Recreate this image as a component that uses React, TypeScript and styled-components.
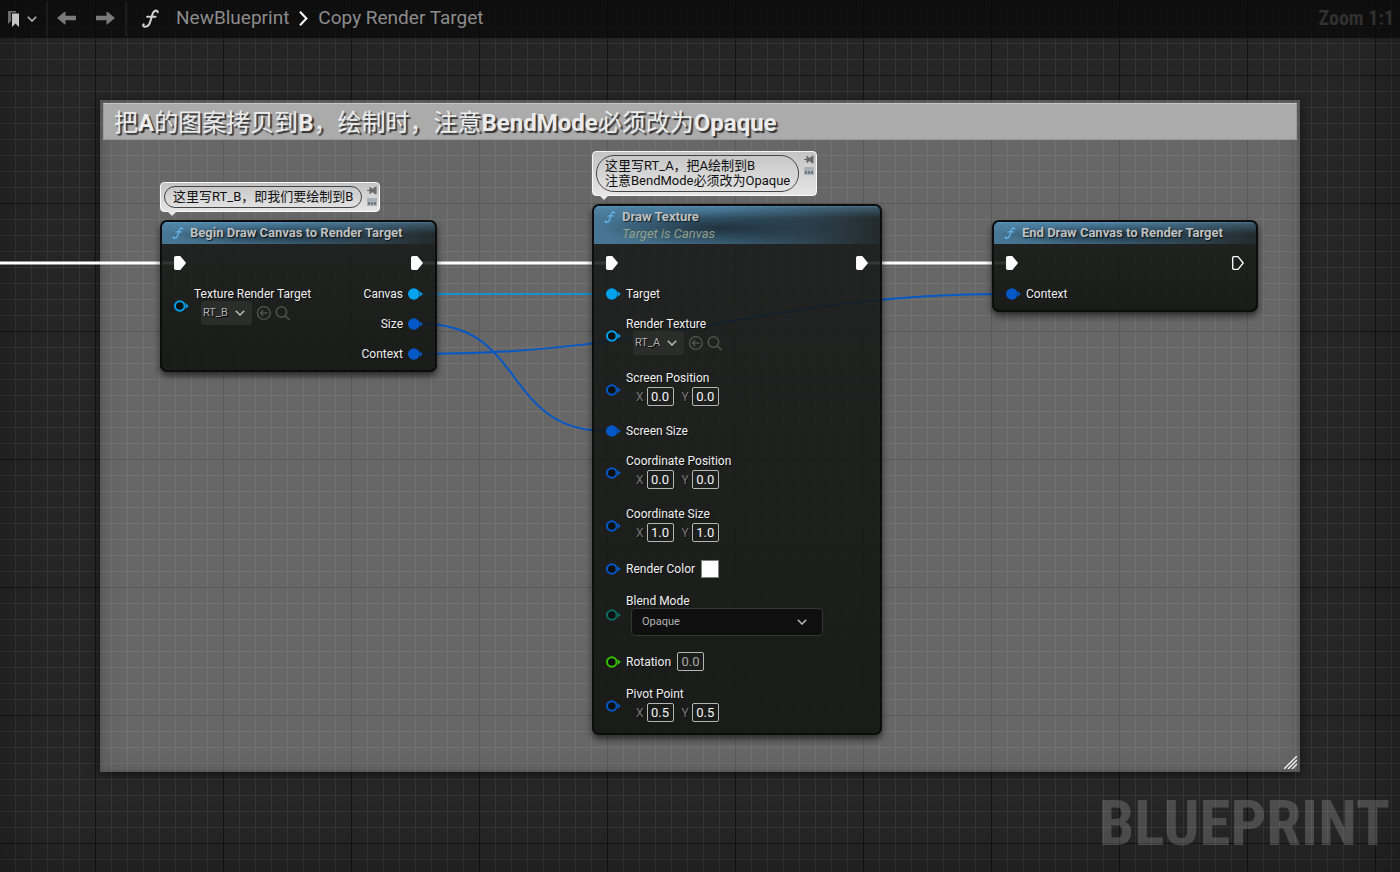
import React from "react";
import styled, { createGlobalStyle, css } from "styled-components";

const GlobalStyle = createGlobalStyle`
  * { box-sizing: border-box; }
  body {
    margin: 0;
    background: #262626;
    font-family: Roboto, "Noto Sans CJK SC", sans-serif;
    font-size: 12px;
    color: #f0f0f0;
  }
  button, input, select { font: inherit; color: inherit; margin: 0; }
`;

const blue = "#0558c8";
const sky = "#00a2ee";
const teal = "#0b6a62";
const green = "#36c400";

/* ---------- Graph surface ---------- */

const Graph = styled.main`
  position: relative;
  min-height: 100vh;
  overflow: hidden;
  background-color: #262626;
  background-image:
    linear-gradient(to right, #141414 1px, transparent 1px),
    linear-gradient(to bottom, #141414 1px, transparent 1px),
    linear-gradient(to right, #353535 1px, transparent 1px),
    linear-gradient(to bottom, #353535 1px, transparent 1px);
  background-size: 128px 128px, 128px 128px, 16px 16px, 16px 16px;
  background-position: 95px 0, 0 75px, 15px 0, 0 11px;
`;

const Vignette = styled.div`
  position: absolute;
  inset: 0;
  box-shadow: inset 0 0 60px rgba(0, 0, 0, 0.35);
  pointer-events: none;
`;

const TopBar = styled.header`
  position: absolute;
  inset: 0 0 auto 0;
  height: 38px;
  display: flex;
  align-items: center;
  background: rgba(8, 8, 8, 0.74);
`;

const BarGroup = styled.div<{ $gap: number; $pad: string }>`
  display: flex;
  align-items: center;
  height: 34px;
  gap: ${(p) => p.$gap}px;
  padding: ${(p) => p.$pad};
  border-right: 2px solid #1c1c1c;
`;

const IconButton = styled.button`
  display: flex;
  align-items: center;
  justify-content: center;
  padding: 0;
  border: 0;
  background: none;
`;

const Crumbs = styled.nav`
  flex: 1;
  display: flex;
  align-items: center;
  gap: 10px;
  padding: 0 0 2px 14px;
  font-size: 19px;
  line-height: 22px;
`;

const Crumb = styled.a`
  color: #8c8c8c;
  text-decoration: none;
`;

const FunctionMark = styled.span`
  display: flex;
  margin-right: 6px;
`;

const ZoomText = styled.span`
  padding: 0 6px 2px 0;
  color: #303030;
  font: bold 20px/24px "Roboto Condensed", "Liberation Sans Narrow", Roboto, sans-serif;
`;

const Watermark = styled.div`
  position: absolute;
  right: 10px;
  bottom: 12px;
  color: rgba(255, 255, 255, 0.18);
  font: bold 63px/72px "Roboto Condensed", "Liberation Sans Narrow", Roboto, sans-serif;
`;

/* ---------- Comment region ---------- */

const Region = styled.section`
  position: absolute;
  left: 100px;
  top: 100px;
  width: 1200px;
  height: 672px;
  padding: 3px;
  background: rgba(255, 255, 255, 0.3);
  box-shadow: 0 2px 10px rgba(0, 0, 0, 0.6), inset 0 0 0 2px rgba(80, 80, 80, 0.3),
    inset 0 0 20px rgba(40, 40, 40, 0.3);
`;

const RegionTitle = styled.h1`
  margin: 0;
  padding: 3px 10px 0;
  height: 37px;
  background: #ababab;
  border: 1px solid #999;
  border-top-color: #c4c4c4;
  font-size: 24px;
  line-height: 32px;
  font-weight: 400;
  color: #ececec;
  text-shadow: 2px 2px 1px #333;
  white-space: nowrap;
  b { font-weight: 700; }
`;

const ResizeGrip = styled.svg`
  position: absolute;
  right: 3px;
  bottom: 3px;
`;

const Wires = styled.svg`
  position: absolute;
  inset: 0;
  width: 100%;
  height: 100%;
`;

/* ---------- Nodes ---------- */

const NodeBox = styled.article<{ $x: number; $y: number; $w: number }>`
  position: absolute;
  left: ${(p) => p.$x}px;
  top: ${(p) => p.$y}px;
  width: ${(p) => p.$w}px;
  border-radius: 7px;
  background: linear-gradient(rgba(22, 25, 23, 0.86), rgba(16, 18, 16, 0.89));
  box-shadow: 0 4px 7px rgba(0, 0, 0, 0.6);
  &::after {
    content: "";
    position: absolute;
    inset: 0;
    border: 2px solid #0c0d0c;
    border-radius: 7px;
    pointer-events: none;
  }
`;

const NodeHeader = styled.header`
  display: flex;
  gap: 6px;
  padding: 4px 12px;
  border-radius: 7px 7px 0 0;
  background:
    linear-gradient(rgba(110, 180, 225, 0.5) 2px, rgba(90, 150, 190, 0.4) 4px, transparent 14px),
    radial-gradient(ellipse 42% 45% at 45% 60%, rgba(24, 38, 48, 0.8), transparent),
    linear-gradient(to right, #487795, #3c647d 45%, #2a3840 85%, #222a2c);
  svg { flex: none; margin-top: 3px; }
`;

const NodeTitle = styled.h2`
  margin: 0;
  font-size: 13px;
  line-height: 17px;
  height: 16px;
  font-weight: 700;
  color: #bfc1c2;
  text-shadow: 1px 1px 1px rgba(0, 0, 0, 0.7);
  white-space: nowrap;
`;

const NodeSubtitle = styled.p`
  margin: 0;
  font-size: 13px;
  line-height: 19px;
  height: 16px;
  font-style: italic;
  color: #929f8a;
`;

const NodeBody = styled.div`
  display: flex;
  justify-content: space-between;
  padding: 4px 14px 3px;
`;

const PinColumn = styled.div<{ $end?: boolean }>`
  display: flex;
  flex-direction: column;
  align-items: ${(p) => (p.$end ? "flex-end" : "flex-start")};
`;

const PinRow = styled.div`
  display: flex;
  align-items: center;
  gap: 5px;
  padding: 8px 0;
  line-height: 14px;
  white-space: nowrap;
  text-shadow: 1px 1px 0 rgba(0, 0, 0, 0.7);
  > svg { flex: none; }
`;

const Stack = styled.div`
  display: flex;
  flex-direction: column;
`;

const Inline = styled.div`
  display: flex;
  align-items: center;
  gap: 6px;
`;

const VectorFields = styled.div`
  display: flex;
  align-items: center;
  padding: 2px 0 2px 10px;
  gap: 8px;
`;

const Axis = styled.label`
  display: flex;
  align-items: center;
  gap: 3px;
  color: #777;
`;

const NumberBox = styled.input<{ $dim?: boolean }>`
  width: 27px;
  height: 19px;
  padding: 0;
  border: 1px solid #b4b6b4;
  border-radius: 2px;
  background: transparent;
  text-align: center;
  font-size: 13px;
  line-height: 17px;
  color: ${(p) => (p.$dim ? "#a8a8a8" : "#f4f4f4")};
`;

const Swatch = styled.button`
  width: 18px;
  height: 18px;
  padding: 0;
  border: 1px solid #808080;
  background: #fff;
`;

const AssetRow = styled.div`
  display: flex;
  align-items: center;
  gap: 4px;
  padding-left: 7px;
`;

const Picker = styled.span<{ $wide?: boolean }>`
  display: grid;
  align-items: center;
  ${(p) =>
    p.$wide
      ? css`width: 192px; margin-left: 5px;`
      : css`width: 51px;`}
  > * { grid-area: 1 / 1; }
  > svg {
    justify-self: end;
    margin-right: ${(p) => (p.$wide ? 16 : 7)}px;
    pointer-events: none;
  }
`;

const PickerSelect = styled.select<{ $wide?: boolean }>`
  appearance: none;
  width: 100%;
  font-size: 11px;
  ${(p) =>
    p.$wide
      ? css`
          height: 28px;
          padding: 0 10px;
          border: 1px solid #343634;
          border-radius: 4px;
          background: #0f0f0f;
          color: #b4b4b4;
        `
      : css`
          height: 24px;
          padding: 0 2px;
          border: 0;
          border-radius: 3px;
          background: #2b2d2b;
          color: #b0b0b0;
          text-shadow: 1px 1px 0 #000;
        `}
`;

/* ---------- Note bubbles ---------- */

const Bubble = styled.aside`
  position: absolute;
  left: 0;
  bottom: calc(100% + 8px);
  display: flex;
  gap: 5px;
  padding: 3px 2px 3px 3px;
  border: 1px solid #f8f8f8;
  border-radius: 4px;
  background: linear-gradient(#c4c4c4, #e6e6e6);
  &::after {
    content: "";
    position: absolute;
    left: 6px;
    top: 100%;
    border: 5px solid transparent;
    border-top-color: #e8e8e8;
    border-bottom-width: 0;
  }
`;

const BubbleText = styled.p`
  margin: 0;
  padding: 2px 8px 3px;
  border: 1px solid #444;
  border-radius: 18px;
  font-size: 13px;
  line-height: 15px;
  color: #111;
  white-space: nowrap;
`;

const BubbleTools = styled.div`
  display: flex;
  flex-direction: column;
  gap: 3px;
`;

/* ---------- Icons ---------- */

const FIcon = ({ size, color }: { size: number; color: string }) => (
  <svg width={size} height={size} viewBox="0 0 20 20" fill="none" stroke={color} strokeLinecap="round">
    <path d="M17.6 3.3C17.4 1.4 14.8 1 13.2 3.2C11.6 5.6 10.6 11.5 9.2 14.8C8 17.8 5.4 19.4 3.2 18.4C2 17.8 2 16.6 2.8 16.2" strokeWidth="2.2" />
    <path d="M6.4 8.2H15.4" strokeWidth="2" />
  </svg>
);

const Chevron = () => (
  <svg width="10" height="6" viewBox="0 0 10 6" fill="none" stroke="#b4b4b4" strokeWidth="1.6">
    <path d="M0.8 0.8L5 5L9.2 0.8" />
  </svg>
);

const ExecPin = ({ open }: { open?: boolean }) => (
  <svg width="12" height="15" viewBox="0 0 12 15" fill={open ? "none" : "#fff"} stroke="#fff" strokeWidth="1.3" strokeLinejoin="round">
    <path d="M0.7 1.8Q0.7 0.7 1.8 0.7H6L11.2 7L6 13.3H1.8Q0.7 13.3 0.7 12.2Z" />
  </svg>
);

const DataPin = ({ color, linked }: { color: string; linked?: boolean }) => (
  <svg width="15" height="12" viewBox="0 0 15 12">
    <circle cx="5.8" cy="6" r="4.8" fill={linked ? color : "#0e1010"} stroke={color} strokeWidth="2" />
    <path d="M11.4 3L14.8 6L11.4 9Q12.6 6 11.4 3Z" fill={color} />
  </svg>
);

const UseIcon = () => (
  <svg width="15" height="15" viewBox="0 0 15 15" fill="none" stroke="#505250" strokeWidth="1.4">
    <circle cx="7.8" cy="7" r="6.4" />
    <path d="M11.5 7H4.5M7.3 4.1L4.4 7L7.3 9.9" />
  </svg>
);

const BrowseIcon = () => (
  <svg width="15" height="15" viewBox="0 0 15 15" fill="none" stroke="#505250" strokeWidth="1.5">
    <circle cx="6.4" cy="6" r="5.2" />
    <path d="M10.2 9.8L14.6 14.2" />
  </svg>
);

const BarArrow = ({ flip }: { flip?: boolean }) => (
  <svg width="19" height="14" viewBox="0 0 19 14" fill="#7a7a7a">
    <path d={flip ? "M19 6L10.5 -1V3.8H0V8.2H10.5V13Z" : "M0 6L8.5 -1V3.8H19V8.2H8.5V13Z"} />
  </svg>
);

/* ---------- Composite parts ---------- */

const AssetPicker = ({ id, value }: { id: string; value: string }) => (
  <AssetRow>
    <Picker>
      <PickerSelect id={id} defaultValue={value}>
        <option>{value}</option>
      </PickerSelect>
      <Chevron />
    </Picker>
    <IconButton aria-label="Use selected asset"><UseIcon /></IconButton>
    <IconButton aria-label="Browse to asset"><BrowseIcon /></IconButton>
  </AssetRow>
);

const AssetPin = ({ id, name, value }: { id: string; name: string; value: string }) => (
  <PinRow>
    <DataPin color={sky} />
    <Stack>
      <label htmlFor={id}>{name}</label>
      <AssetPicker id={id} value={value} />
    </Stack>
  </PinRow>
);

const VectorPin = ({ name, value }: { name: string; value: string }) => (
  <PinRow>
    <DataPin color={blue} />
    <Stack role="group" aria-label={name}>
      <span>{name}</span>
      <VectorFields>
        <Axis>X<NumberBox defaultValue={value} /></Axis>
        <Axis>Y<NumberBox defaultValue={value} /></Axis>
      </VectorFields>
    </Stack>
  </PinRow>
);

const InputPin = ({ name, color }: { name: string; color: string }) => (
  <PinRow><DataPin color={color} linked />{name}</PinRow>
);

const OutputPin = ({ name, color }: { name: string; color: string }) => (
  <PinRow>{name}<DataPin color={color} linked /></PinRow>
);

const Note = ({ lines }: { lines: string[] }) => (
  <Bubble>
    <BubbleText>
      {lines.map((line) => (
        <React.Fragment key={line}>{line}<br /></React.Fragment>
      ))}
    </BubbleText>
    <BubbleTools>
      <IconButton aria-label="Pin comment">
        <svg width="10" height="9" viewBox="0 0 10 9" fill="#6a6a6a">
          <path d="M0 4H2.4V1.2H3.8L4.6 2.6H6.4L7.8 0.8H9.6V8.2H7.8L6.4 6.4H4.6L3.8 7.8H2.4V5H0Z" />
        </svg>
      </IconButton>
      <IconButton aria-label="Toggle bubble">
        <svg width="10" height="8" viewBox="0 0 10 8">
          <rect width="10" height="8" fill="#a9b1b8" />
          <path d="M1 5.6H3M4 5.6H6M7 5.6H9" stroke="#59636c" strokeWidth="2" />
        </svg>
      </IconButton>
    </BubbleTools>
  </Bubble>
);

interface NodeProps {
  x: number;
  y: number;
  width: number;
  title: string;
  subtitle?: string;
  note?: string[];
  inputs: React.ReactNode;
  outputs: React.ReactNode;
}

const GraphNode = ({ x, y, width, title, subtitle, note, inputs, outputs }: NodeProps) => (
  <NodeBox $x={x} $y={y} $w={width}>
    {note && <Note lines={note} />}
    <NodeHeader>
      <FIcon size={12} color="#62b4ea" />
      <div>
        <NodeTitle>{title}</NodeTitle>
        {subtitle && <NodeSubtitle>{subtitle}</NodeSubtitle>}
      </div>
    </NodeHeader>
    <NodeBody>
      <PinColumn>{inputs}</PinColumn>
      <PinColumn $end>{outputs}</PinColumn>
    </NodeBody>
  </NodeBox>
);

export default function App() {
  return (
    <>
      <GlobalStyle />
      <Graph>
        <Vignette />
        <Region>
          <RegionTitle>
            把<b>A</b>的图案拷贝到<b>B</b>，绘制时，注意<b>BendMode</b>必须改为<b>Opaque</b>
          </RegionTitle>
          <ResizeGrip width="13" height="13" viewBox="0 0 13 13" stroke="#f4f4f4" strokeWidth="1.4">
            <path d="M0 13L13 0M4 13L13 4M8 13L13 8" />
          </ResizeGrip>
        </Region>
        <Watermark>BLUEPRINT</Watermark>
        <Wires fill="none">
          <path d="M0 263H174M423 263H606M868 263H1006" stroke="#fff" strokeWidth="3" />
          <path d="M423 294H606" stroke="#1691cf" strokeWidth="2" />
          <path d="M423 324C526 324 503 431 606 431" stroke={blue} strokeWidth="2" />
          <path d="M423 354C667 354 762 294 1006 294" stroke={blue} strokeWidth="2" />
        </Wires>
        <GraphNode
          x={160}
          y={220}
          width={277}
          title="Begin Draw Canvas to Render Target"
          note={["这里写RT_B，即我们要绘制到B"]}
          inputs={
            <>
              <PinRow><ExecPin /></PinRow>
              <AssetPin id="target-asset" name="Texture Render Target" value="RT_B" />
            </>
          }
          outputs={
            <>
              <PinRow><ExecPin /></PinRow>
              <OutputPin name="Canvas" color={sky} />
              <OutputPin name="Size" color={blue} />
              <OutputPin name="Context" color={blue} />
            </>
          }
        />
        <GraphNode
          x={592}
          y={204}
          width={290}
          title="Draw Texture"
          subtitle="Target is Canvas"
          note={["这里写RT_A，把A绘制到B", "注意BendMode必须改为Opaque"]}
          inputs={
            <>
              <PinRow><ExecPin /></PinRow>
              <InputPin name="Target" color={sky} />
              <AssetPin id="render-texture" name="Render Texture" value="RT_A" />
              <VectorPin name="Screen Position" value="0.0" />
              <InputPin name="Screen Size" color={blue} />
              <VectorPin name="Coordinate Position" value="0.0" />
              <VectorPin name="Coordinate Size" value="1.0" />
              <PinRow>
                <DataPin color={blue} />
                <Inline>
                  <label htmlFor="render-color">Render Color</label>
                  <Swatch id="render-color" />
                </Inline>
              </PinRow>
              <PinRow>
                <DataPin color={teal} />
                <Stack>
                  <label htmlFor="blend-mode">Blend Mode</label>
                  <Picker $wide>
                    <PickerSelect $wide id="blend-mode" defaultValue="Opaque">
                      <option>Opaque</option>
                    </PickerSelect>
                    <Chevron />
                  </Picker>
                </Stack>
              </PinRow>
              <PinRow>
                <DataPin color={green} />
                <Inline>
                  <label htmlFor="rotation">Rotation</label>
                  <NumberBox $dim id="rotation" defaultValue="0.0" />
                </Inline>
              </PinRow>
              <VectorPin name="Pivot Point" value="0.5" />
            </>
          }
          outputs={<PinRow><ExecPin /></PinRow>}
        />
        <GraphNode
          x={992}
          y={220}
          width={266}
          title="End Draw Canvas to Render Target"
          inputs={
            <>
              <PinRow><ExecPin /></PinRow>
              <InputPin name="Context" color={blue} />
            </>
          }
          outputs={<PinRow><ExecPin open /></PinRow>}
        />
        <TopBar>
          <BarGroup $gap={8} $pad="0 9px 0 8px">
            <IconButton aria-label="Bookmarks">
              <svg width="11" height="16" viewBox="0 0 11 16">
                <path d="M0 0H8V1.6H3V10L0 13Z" fill="#6c6c6c" />
                <path d="M4 2.5H11V16L7.5 12.4L4 16Z" fill="#c4c4c4" />
              </svg>
            </IconButton>
            <IconButton aria-label="Bookmark options"><Chevron /></IconButton>
          </BarGroup>
          <BarGroup $gap={20} $pad="0 10px 0 9px">
            <IconButton aria-label="Back"><BarArrow /></IconButton>
            <IconButton aria-label="Forward"><BarArrow flip /></IconButton>
          </BarGroup>
          <Crumbs aria-label="Breadcrumb">
            <FunctionMark><FIcon size={19} color="#d0d0d0" /></FunctionMark>
            <Crumb href="#blueprint">NewBlueprint</Crumb>
            <svg width="9" height="15" viewBox="0 0 9 15" fill="none" stroke="#fff" strokeWidth="2">
              <path d="M1 0.8L7.4 7.5L1 14.2" />
            </svg>
            <Crumb href="#function">Copy Render Target</Crumb>
          </Crumbs>
          <ZoomText>Zoom 1:1</ZoomText>
        </TopBar>
      </Graph>
    </>
  );
}
